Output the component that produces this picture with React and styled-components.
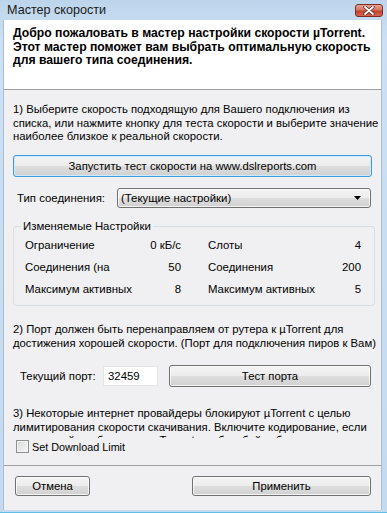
import React from 'react';
import styled, { createGlobalStyle } from 'styled-components';

const font = `"Liberation Sans", Arial, sans-serif`;

const GlobalStyle = createGlobalStyle`
  html, body {
    margin: 0;
    padding: 0;
    background: #ffffff;
  }
  body {
    font-family: ${font};
  }
`;

const Window = styled.div`
  width: 387px;
  height: 513px;
  box-sizing: border-box;
  display: flex;
  flex-direction: column;
  padding: 0 5px 3px 3px;
  background: linear-gradient(180deg, #bdd5ec 0%, #cde0f3 8%, #c4daef 100%);
  box-shadow: inset 0 -1px 0 #62bde6;
`;

const TitleBar = styled.div`
  height: 20px;
  display: flex;
  align-items: center;
  justify-content: space-between;
  padding-left: 4px;
`;

const Title = styled.span`
  font-size: 12.6px;
  color: #1a1a1a;
`;

const CloseButton = styled.div`
  width: 28px;
  height: 13px;
  margin-right: -1px;
  margin-top: 1px;
  box-sizing: border-box;
  border: 1px solid #7a2e26;
  border-radius: 3px;
  background: linear-gradient(180deg, #e8a493 0%, #d47560 45%, #c2412f 55%, #d2684f 100%);
  display: flex;
  align-items: center;
  justify-content: center;
`;

const Client = styled.div`
  flex: 1;
  display: flex;
  flex-direction: column;
  background: #f0f0f2;
  border-left: 1px solid #a6bfd6;
  border-right: 1px solid #a6bfd6;
`;

const Header = styled.div`
  height: 70px;
  flex: none;
  box-sizing: border-box;
  padding: 7px 9px 0;
  background: #ffffff;
  border-bottom: 1px solid #a0a0a0;
  font-size: 12.2px;
  font-weight: bold;
  line-height: 13.5px;
  color: #000;
  white-space: nowrap;
`;

const ScrollArea = styled.div`
  height: 348px;
  flex: none;
  overflow: hidden;
  padding: 0 9px;
`;

const Paragraph = styled.div`
  margin-top: ${p => p.$top}px;
  font-size: 11.3px;
  line-height: 13.5px;
  color: #000;
  white-space: nowrap;
`;

const Button = styled.button`
  height: ${p => p.$h || 22}px;
  width: ${p => (p.$w ? `${p.$w}px` : 'auto')};
  flex: ${p => (p.$w ? 'none' : '1')};
  box-sizing: border-box;
  padding: 0;
  border: 1px solid ${p => (p.$focused ? '#3d9be0' : '#707070')};
  border-radius: 3px;
  background: linear-gradient(180deg, #f4f4f4 0%, #ececec 48%, #dedede 52%, #d0d0d0 100%);
  box-shadow: inset 0 0 0 1px ${p => (p.$focused ? '#cfeafb' : 'rgba(255,255,255,0.75)')};
  font-family: ${font};
  font-size: 11.3px;
  color: #000;
`;

const WideButton = styled(Button)`
  display: block;
  margin-top: 11.5px;
  width: 100%;
`;

const ComboRow = styled.div`
  margin-top: 11px;
  height: 20px;
  display: flex;
  align-items: center;
`;

const FieldLabel = styled.span`
  width: ${p => p.$w}px;
  margin-left: ${p => p.$left}px;
  flex: none;
  font-size: 11.4px;
  color: #000;
`;

const Combo = styled.div`
  flex: 1;
  height: 20px;
  margin-right: 1px;
  box-sizing: border-box;
  border: 1px solid #707070;
  border-radius: 3px;
  background: linear-gradient(180deg, #f4f4f4 0%, #ececec 48%, #dedede 52%, #d0d0d0 100%);
  box-shadow: inset 0 0 0 1px rgba(255, 255, 255, 0.75);
  display: flex;
  align-items: center;
  justify-content: space-between;
  padding: 0 9px 0 3px;
  font-size: 11.4px;
`;

const Group = styled.fieldset`
  margin: 11px -2px 0 0;
  padding: 0 13px 5px 11px;
  border: 1px solid #d5dfe5;
  border-radius: 3px;
`;

const Legend = styled.legend`
  margin-left: -4px;
  padding: 0 2px;
  font-size: 11.4px;
  line-height: 14px;
  color: #000;
`;

const StatsGrid = styled.div`
  display: grid;
  grid-template-columns: 156px 153px;
  column-gap: 27px;
  padding-top: 1px;
`;

const StatRow = styled.div`
  height: 22px;
  display: flex;
  align-items: center;
  justify-content: space-between;
  font-size: 11.4px;
  color: #000;
`;

const PortRow = styled.div`
  margin-top: 15px;
  height: 22px;
  display: flex;
  align-items: center;
`;

const PortInput = styled.div`
  width: 55px;
  height: 20px;
  margin-right: 11px;
  box-sizing: border-box;
  border: 1px solid #e4e4e6;
  background: #ffffff;
  display: flex;
  align-items: center;
  padding-left: 4px;
  font-size: 11.4px;
`;

const Footer = styled.div`
  display: flex;
  flex-direction: column;
`;

const CheckRow = styled.label`
  height: 17px;
  display: flex;
  align-items: center;
  gap: 3px;
  padding-left: 12px;
  font-size: 10.8px;
  color: #000;
`;

const CheckBox = styled.span`
  width: 13px;
  height: 13px;
  box-sizing: border-box;
  border: 1px solid #8e8f8f;
  background: linear-gradient(135deg, #d8d8d8 0%, #ebebeb 60%, #f6f6f6 100%);
  box-shadow: inset 0 0 0 1px #f4f4f4;
`;

const Separator = styled.div`
  margin-top: 10px;
  height: 1px;
  background: #a0a0a0;
`;

const ButtonRow = styled.div`
  margin-top: 10px;
  display: flex;
  justify-content: space-between;
  padding: 0 10px 0 11px;
`;

const stats = [
  ['Ограничение', '0 кБ/с', 'Слоты', '4'],
  ['Соединения (на', '50', 'Соединения', '200'],
  ['Максимум активных', '8', 'Максимум активных', '5'],
];

const App = () => (
  <>
    <GlobalStyle />
    <Window>
      <TitleBar>
        <Title>Мастер скорости</Title>
        <CloseButton>
          <svg width="12" height="9" viewBox="0 0 12 9">
            <path d="M2 1 L10 8 M10 1 L2 8" stroke="#5a1f19" strokeWidth="3.2" strokeLinecap="round" />
            <path d="M2 1 L10 8 M10 1 L2 8" stroke="#ffffff" strokeWidth="1.8" strokeLinecap="round" />
          </svg>
        </CloseButton>
      </TitleBar>
      <Client>
        <Header>
          Добро пожаловать в мастер настройки скорости µTorrent.<br />
          Этот мастер поможет вам выбрать оптимальную скорость<br />
          для вашего типа соединения.
        </Header>
        <ScrollArea>
          <Paragraph $top={13}>
            1) Выберите скорость подходящую для Вашего подключения из<br />
            списка, или нажмите кнопку для теста скорости и выберите значение<br />
            наиболее близкое к реальной скорости.
          </Paragraph>
          <WideButton $focused>Запустить тест скорости на www.dslreports.com</WideButton>
          <ComboRow>
            <FieldLabel $left={4} $w={100}>Тип соединения:</FieldLabel>
            <Combo>
              <span>(Текущие настройки)</span>
              <svg width="7" height="4" viewBox="0 0 7 4">
                <polygon points="0,0 7,0 3.5,4" fill="#000" />
              </svg>
            </Combo>
          </ComboRow>
          <Group>
            <Legend>Изменяемые Настройки</Legend>
            <StatsGrid>
              {stats.map(([l1, v1, l2, v2]) => (
                <React.Fragment key={l1 + l2}>
                  <StatRow>
                    <span>{l1}</span>
                    <span>{v1}</span>
                  </StatRow>
                  <StatRow>
                    <span>{l2}</span>
                    <span>{v2}</span>
                  </StatRow>
                </React.Fragment>
              ))}
            </StatsGrid>
          </Group>
          <Paragraph $top={17}>
            2) Порт должен быть перенаправляем от рутера к µTorrent для<br />
            достижения хорошей скорости. (Порт для подключения пиров к Вам)
          </Paragraph>
          <PortRow>
            <FieldLabel $left={7} $w={83}>Текущий порт:</FieldLabel>
            <PortInput>32459</PortInput>
            <Button $h={22} style={{ marginRight: 1 }}>Тест порта</Button>
          </PortRow>
          <Paragraph $top={20}>
            3) Некоторые интернет провайдеры блокируют µTorrent с целью<br />
            лимитирования скорости скачивания. Включите кодирование, если<br />
            ваш провайдер блокирует µTorrent, чтобы обойти блокировку.
          </Paragraph>
        </ScrollArea>
        <Footer>
          <CheckRow>
            <CheckBox />
            Set Download Limit
          </CheckRow>
          <Separator />
          <ButtonRow>
            <Button $w={75} $h={20}>Отмена</Button>
            <Button $w={179} $h={20}>Применить</Button>
          </ButtonRow>
        </Footer>
      </Client>
    </Window>
  </>
);

export default App;
